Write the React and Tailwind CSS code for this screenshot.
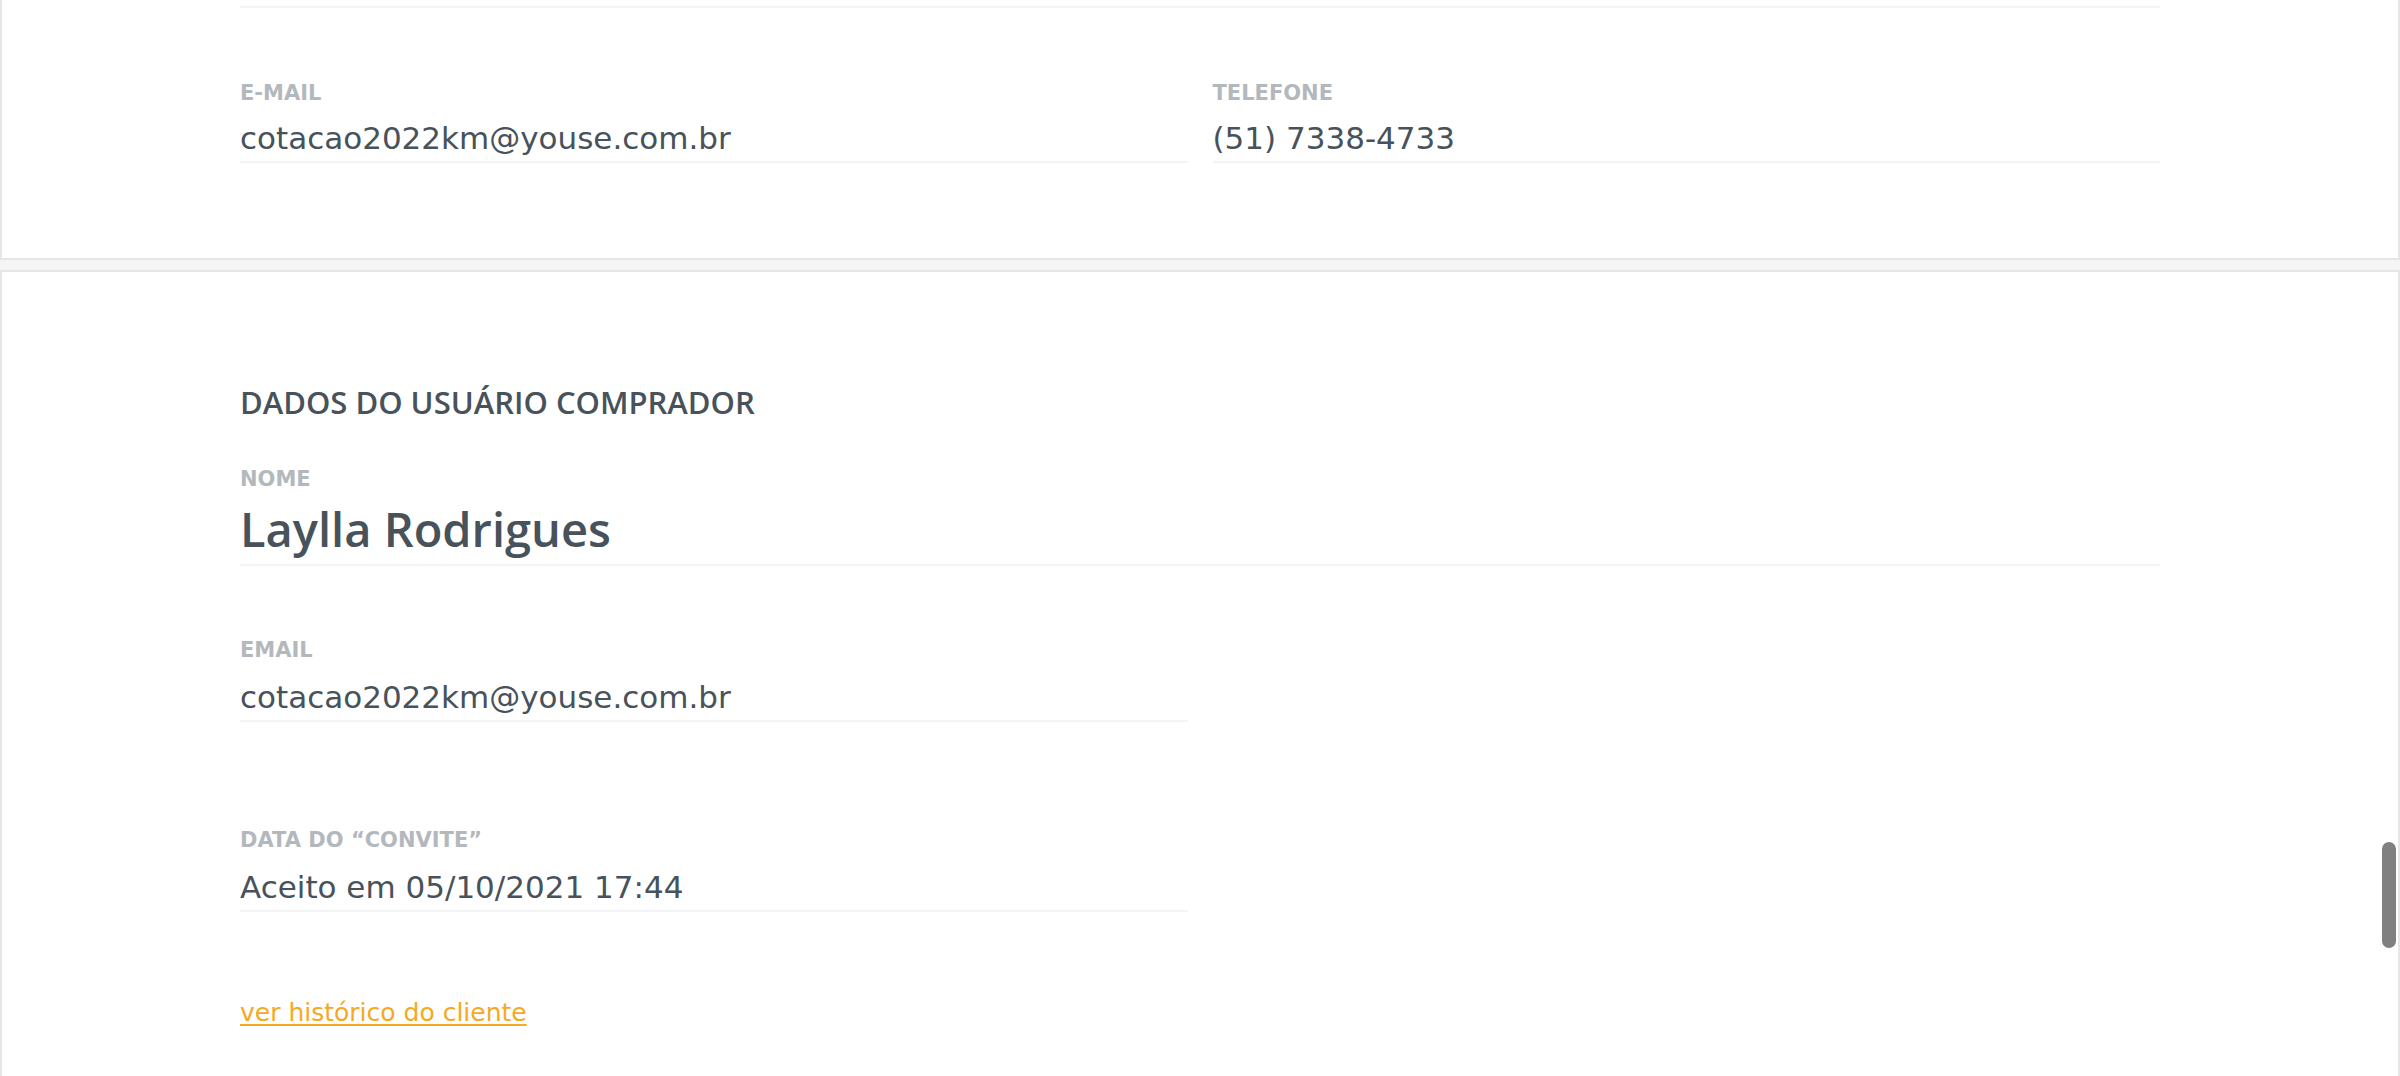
import React from 'react';

const label = "font-['DejaVu_Sans',sans-serif] font-bold text-[21px] leading-[24px] text-[#b3b8bd] uppercase";
const value = "font-['DejaVu_Sans',sans-serif] text-[31px] leading-[36px] text-[#47525b] pb-[5px] border-b-2 border-[#f3f4f5]";

function Field({ title, children, className = '' }) {
  return (
    <div className={className}>
      <div className={label}>{title}</div>
      <div className={`${value} mt-[15px]`}>{children}</div>
    </div>
  );
}

export default function App() {
  return (
    <div className="relative h-[1076px] w-[2400px] overflow-hidden bg-[#f5f5f5]">
      {/* card cut off by scroll */}
      <div className="bg-white border-2 border-t-0 border-[#e6e6e6] pl-[238px] pr-[238px] pt-[6px] pb-[95px]">
        <div className="h-[2px] bg-[#f3f4f5]"></div>
        <div className="grid grid-cols-2 gap-x-[25px] mt-[73px]">
          <Field title="E-mail">cotacao2022km@youse.com.br</Field>
          <Field title="Telefone">(51) 7338-4733</Field>
        </div>
      </div>

      <div className="mt-[10px] bg-white border-2 border-b-0 border-[#e6e6e6] pl-[238px] pr-[238px] pt-[110px]">
        <h2 className="font-['Open_Sans',sans-serif] font-semibold text-[31px] leading-[40px] text-[#47525b]">
          DADOS DO USUÁRIO COMPRADOR
        </h2>

        <div className="mt-[45px]">
          <div className={label}>Nome</div>
          <div className="mt-[10px] font-['Open_Sans',sans-serif] font-semibold text-[47px] leading-[56px] text-[#47525b] pb-[7px] border-b-2 border-[#f3f4f5]">
            Laylla Rodrigues
          </div>
        </div>

        <div className="grid grid-cols-2 gap-x-[25px]">
          <div className="mt-[72px]">
            <div className={label}>Email</div>
            <div className={`${value} mt-[17px]`}>cotacao2022km@youse.com.br</div>
          </div>
        </div>

        <div className="grid grid-cols-2 gap-x-[25px]">
          <div className="mt-[106px]">
            <div className={label}>Data do “convite”</div>
            <div className={`${value} mt-[17px]`}>Aceito em 05/10/2021 17:44</div>
          </div>
        </div>

        <div className="mt-[86px] pb-[60px]">
          <a
            href="#"
            className="font-['DejaVu_Sans',sans-serif] text-[25px] leading-[30px] text-[#f7a823] underline decoration-2 underline-offset-[3px]"
          >
            ver histórico do cliente
          </a>
        </div>
      </div>

      {/* scrollbar thumb */}
      <div className="absolute left-[2382px] top-[842px] w-[14px] h-[106px] rounded-full bg-[#808080]"></div>
    </div>
  );
}
